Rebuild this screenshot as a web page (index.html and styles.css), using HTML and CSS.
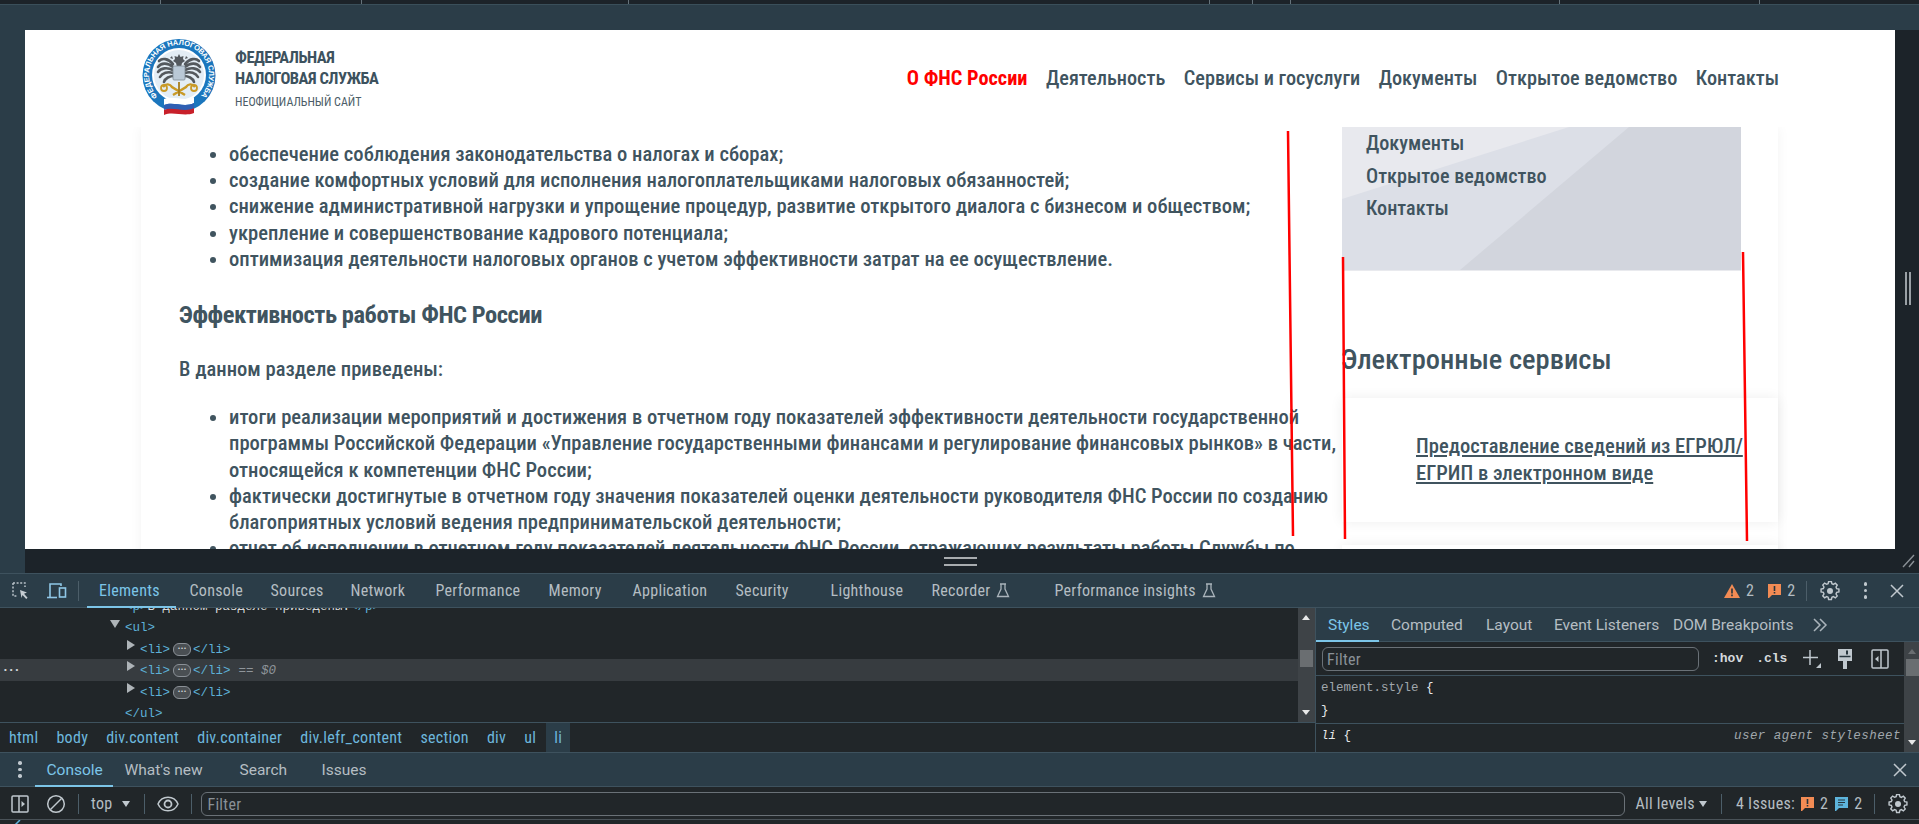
FILE: index.html
```html
<!DOCTYPE html>
<html lang="ru">
<head>
  <meta charset="UTF-8">
  <title>ФНС России</title>
  <link rel="stylesheet" href="styles.css">
</head>
<body>

  <div class="ruler"></div>

  <div class="device-area">
    <div class="device-row">
      <div class="viewport">
        <header class="site-header">
          <a class="logo">
            <svg class="logo-img" width="74" height="78" viewBox="0 0 74 78">
              <defs>
                <path id="ring-path" d="M13.8 56.2A30 30 0 1 1 56.2 56.2"/>
              </defs>
              <circle cx="37" cy="36.5" r="36.5" fill="#1b76bd"/>
              <g transform="translate(2 1)">
                <circle cx="35" cy="35" r="27" fill="#fff"/>
                <circle cx="35" cy="35" r="25" fill="#e3edf5"/>
                <text class="ring-text" textLength="140"><textPath href="#ring-path">ФЕДЕРАЛЬНАЯ НАЛОГОВАЯ СЛУЖБА</textPath></text>
                <!-- eagle -->
                <g stroke="#54595e" stroke-width="2.6" stroke-linecap="round" fill="none">
                  <path d="M29 24C24 18 18 18 15 21M29 27C23 22 17 23 14 27M29 30C23 27 17 28 14 32M29 33C24 31 18 33 16 37M30 36C26 36 21 38 20 42"/>
                  <path d="M41 24C46 18 52 18 55 21M41 27C47 22 53 23 56 27M41 30C47 27 53 28 56 32M41 33C46 31 52 33 54 37M40 36C44 36 49 38 50 42"/>
                </g>
                <path d="M35 14l-1.500 3-3-1 .5 3-2 2 3 2 1 4h4l1-4 3-2-2-2 .5-3-3 1z" fill="#54595e"/>
                <path d="M29 19l-3-1 2-2zM41 19l3-1-2-2z" fill="#54595e"/>
                <rect x="29" y="26" width="12" height="14" rx="1" fill="#b9c8d6" stroke="#7d8a96" stroke-width=".8"/>
                <!-- keys -->
                <path d="M19 47c3-4 7-3 9 0l13 8M51 47c-3-4-7-3-9 0l-13 8" stroke="#c99a27" stroke-width="2.4" fill="none"/>
                <circle cx="20" cy="48" r="3" fill="none" stroke="#c99a27" stroke-width="1.8"/>
                <circle cx="50" cy="48" r="3" fill="none" stroke="#c99a27" stroke-width="1.8"/>
                <path d="M35 42v14" stroke="#a67d1c" stroke-width="1.8"/>
              </g>
              <!-- flag -->
              <path d="M22 60c9-4 20 3 30-2v6c-10 5-21-2-30 2z" fill="#fff"/>
              <path d="M22 66c9-4 20 3 30-2v5c-10 5-21-2-30 2z" fill="#2f5fb3"/>
              <path d="M22 71c9-4 20 3 30-2v5c-10 4-21-2-30 2z" fill="#c8202a"/>
            </svg>
            <div class="logo-text">
              <div class="logo-title">ФЕДЕРАЛЬНАЯ<br>НАЛОГОВАЯ СЛУЖБА</div>
              <div class="logo-sub">НЕОФИЦИАЛЬНЫЙ САЙТ</div>
            </div>
          </a>
          <nav class="main-nav">
            <a class="active">О ФНС России</a>
            <a>Деятельность</a>
            <a>Сервисы и госуслуги</a>
            <a>Документы</a>
            <a>Открытое ведомство</a>
            <a>Контакты</a>
          </nav>
        </header>

        <div class="content">
          <div class="container">
            <section class="left-content">
              <ul>
                <li>обеспечение соблюдения законодательства о налогах и сборах;</li>
                <li>создание комфортных условий для исполнения налогоплательщиками налоговых обязанностей;</li>
                <li>снижение административной нагрузки и упрощение процедур, развитие открытого диалога с бизнесом и обществом;</li>
                <li>укрепление и совершенствование кадрового потенциала;</li>
                <li>оптимизация деятельности налоговых органов с учетом эффективности затрат на ее осуществление.</li>
              </ul>
              <h2>Эффективность работы ФНС России</h2>
              <p>В данном разделе приведены:</p>
              <ul>
                <li>итоги реализации мероприятий и достижения в отчетном году показателей эффективности деятельности государственной<br>программы Российской Федерации «Управление государственными финансами и регулирование финансовых рынков» в части,<br>относящейся к компетенции ФНС России;</li>
                <li>фактически достигнутые в отчетном году значения показателей оценки деятельности руководителя ФНС России по созданию<br>благоприятных условий ведения предпринимательской деятельности;</li>
                <li>отчет об исполнении в отчетном году показателей деятельности ФНС России, отражающих результаты работы Службы по</li>
              </ul>
            </section>
            <aside class="sidebar">
              <div class="side-menu">
                <a>Документы</a>
                <a>Открытое ведомство</a>
                <a>Контакты</a>
              </div>
              <h3>Электронные сервисы</h3>
              <div class="service-card">
                <a>Предоставление сведений из ЕГРЮЛ/<br>ЕГРИП в электронном виде</a>
              </div>
              <div class="service-card"></div>
            </aside>
          </div>
        </div>
      </div>
      <div class="side-handle"><span></span><span></span></div>
    </div>
    <div class="bottom-handle">
      <div class="dock-handle"></div>
      <svg class="corner-handle" width="16" height="14" viewBox="0 0 16 14"><path d="M3 13L14 1M9 13l5-6" stroke="#8a9096" stroke-width="1.4" fill="none"/></svg>
    </div>
  </div>

  <div class="devtools">
    <div class="tabbar main-tabs">
      <div class="tool-icon">
        <svg width="20" height="20" viewBox="0 0 20 20" fill="none"><path d="M2 2h12v4M2 2v13h4" stroke="#b9c2c9" stroke-width="1.5" stroke-dasharray="2 1.6"/><path d="M9 9l7 2.500-3 1.200 3.600 4-1.400 1.200-3.700-4-1 3z" fill="#c5ccd2"/></svg>
      </div>
      <div class="tool-icon">
        <svg width="22" height="20" viewBox="0 0 22 20" fill="none"><path d="M4 16V3h11v2" stroke="#8fc7e6" stroke-width="1.6"/><rect x="13.5" y="7" width="6" height="9" stroke="#8fc7e6" stroke-width="1.6"/><path d="M1 16.5h10" stroke="#8fc7e6" stroke-width="1.6"/></svg>
      </div>
      <div class="divider"></div>
      <a class="tab active tab-elements">Elements</a>
      <a class="tab tab-console">Console</a>
      <a class="tab tab-sources">Sources</a>
      <a class="tab tab-network">Network</a>
      <a class="tab tab-performance">Performance</a>
      <a class="tab tab-memory">Memory</a>
      <a class="tab tab-application">Application</a>
      <a class="tab tab-security">Security</a>
      <a class="tab tab-lighthouse">Lighthouse</a>
      <a class="tab tab-recorder">Recorder
        <svg width="14" height="15" viewBox="0 0 14 15" fill="none"><path d="M4 1h6M5 1v5L1.500 13.500h11L9 6V1" stroke="#aab4bb" stroke-width="1.3"/></svg>
      </a>
      <a class="tab tab-insights">Performance insights
        <svg width="14" height="15" viewBox="0 0 14 15" fill="none"><path d="M4 1h6M5 1v5L1.500 13.500h11L9 6V1" stroke="#aab4bb" stroke-width="1.3"/></svg>
      </a>
      <div class="tabbar-right">
        <svg width="16" height="14" viewBox="0 0 16 14"><path d="M8 0l8 14H0z" fill="#f28b54"/><path d="M7.200 4.500h1.600v5H7.200zM7.200 10.500h1.600v1.700H7.200z" fill="#26343c"/></svg>
        <span class="count">2</span>
        <svg class="icon-gap" width="13" height="14" viewBox="0 0 13 14"><path d="M0 0h13v11H4l-3 3H0z" fill="#f28b54"/><path d="M5.700 2h1.600v5H5.700zM5.700 8h1.600v1.600H5.700z" fill="#26343c"/></svg>
        <span class="count">2</span>
        <div class="divider divider-right"></div>
        <svg class="gear" width="20" height="20" viewBox="0 0 20 20" fill="none"><path d="M8.500 1.500h3l.5 2.400 1.600.7 2.100-1.300 2 2.100-1.300 2 .7 1.700 2.400.5v3l-2.400.5-.7 1.700 1.300 2-2 2.100-2.100-1.300-1.600.7-.5 2.400h-3L8 18.200l-1.600-.7-2.100 1.300-2-2.100 1.300-2-.7-1.700-2.400-.5v-3l2.400-.5.7-1.700-1.300-2 2-2.100 2.100 1.300L8 3.900z" transform="translate(0.6 -0.9) scale(.94)" stroke="#c0c8ce" stroke-width="1.5"/><circle cx="10" cy="10" r="3" fill="#c0c8ce"/></svg>
        <div class="dots"><i></i><i></i><i></i></div>
        <svg class="close" width="14" height="14" viewBox="0 0 14 14"><path d="M1 1l12 12M13 1L1 13" stroke="#c0c8ce" stroke-width="1.5"/></svg>
      </div>
    </div>

    <div class="panels">
      <div class="elements-panel">
        <div class="dom-tree">
          <div class="dom-scroll">
            <div class="dom-rows">
              <div class="dom-row depth-1"><b>&lt;p&gt;</b>В данном разделе приведены:<b>&lt;/p&gt;</b></div>
              <div class="dom-row depth-1"><i class="tri-down"></i><b>&lt;ul&gt;</b></div>
              <div class="dom-row depth-2"><i class="tri-right"></i><b>&lt;li&gt;</b><u class="ellipsis">•••</u><b>&lt;/li&gt;</b></div>
              <div class="dom-row depth-2 selected"><span class="row-dots">•••</span><i class="tri-right"></i><b>&lt;li&gt;</b><u class="ellipsis">•••</u><b>&lt;/li&gt;</b><em>== $0</em></div>
              <div class="dom-row depth-2"><i class="tri-right"></i><b>&lt;li&gt;</b><u class="ellipsis">•••</u><b>&lt;/li&gt;</b></div>
              <div class="dom-row depth-1"><b>&lt;/ul&gt;</b></div>
            </div>
          </div>
          <div class="scrollbar">
            <span class="arrow-up"></span>
            <span class="thumb thumb-dom"></span>
            <span class="arrow-down"></span>
          </div>
        </div>
        <div class="crumbs">
          <a>html</a><a>body</a><a>div.content</a><a>div.container</a><a>div.lefr_content</a><a>section</a><a>div</a><a>ul</a><a class="current">li</a>
        </div>
      </div>

      <div class="styles-panel">
        <div class="tabbar style-tabs">
          <a class="tab active tab-styles">Styles</a>
          <a class="tab tab-computed">Computed</a>
          <a class="tab tab-layout">Layout</a>
          <a class="tab tab-listeners">Event Listeners</a>
          <a class="tab tab-dom">DOM Breakpoints</a>
          <svg class="more" width="16" height="14" viewBox="0 0 16 14" fill="none"><path d="M2 1l6 6-6 6M8 1l6 6-6 6" stroke="#aab4bb" stroke-width="1.5"/></svg>
        </div>
        <div class="styles-body">
          <div class="styles-main">
            <div class="filter-row">
              <div class="filter-input">Filter</div>
              <span class="pill-text">:hov</span>
              <span class="pill-text">.cls</span>
              <svg class="plus" width="20" height="20" viewBox="0 0 20 20"><path d="M8 1v15M1 8.500h15" stroke="#c0c8ce" stroke-width="1.5"/><path d="M19 14v5h-5z" fill="#c0c8ce"/></svg>
              <svg class="brush" width="16" height="22" viewBox="0 0 16 22" fill="none"><path d="M1 1h14v12H1z" fill="#c0c8ce"/><path d="M2.500 8.500h11" stroke="#26343c" stroke-width="1.5"/><rect x="9" y="2.500" width="2" height="4" fill="#26343c"/><rect x="6" y="13" width="4" height="8" fill="#c0c8ce"/></svg>
              <svg class="pane" width="18" height="20" viewBox="0 0 18 20" fill="none"><rect x="1" y="1" width="16" height="18" rx="1" stroke="#c0c8ce" stroke-width="1.5"/><path d="M10 1v18" stroke="#c0c8ce" stroke-width="1.5"/><path d="M7.500 7v6L4 10z" fill="#c0c8ce"/></svg>
            </div>
            <div class="rule">
              <div class="code-line code-muted">element.style <span class="brace">{</span></div>
              <div class="code-line brace">}</div>
            </div>
            <div class="rule rule-last">
              <div class="code-line"><span class="selector">li</span> <span class="brace">{</span><span class="origin">user agent stylesheet</span></div>
              <div class="code-line code-indent"><span class="prop">display</span>: list-item;</div>
            </div>
          </div>
          <div class="scrollbar scrollbar-styles">
            <span class="arrow-up"></span>
            <span class="thumb thumb-styles"></span>
            <span class="arrow-down"></span>
          </div>
        </div>
      </div>
    </div>

    <div class="tabbar drawer-tabs">
      <div class="dots dots-drawer"><i></i><i></i><i></i></div>
      <a class="tab active tab-drawer-console">Console</a>
      <a class="tab tab-whatsnew">What's new</a>
      <a class="tab tab-search">Search</a>
      <a class="tab tab-issues">Issues</a>
      <svg class="close close-drawer" width="14" height="14" viewBox="0 0 14 14"><path d="M1 1l12 12M13 1L1 13" stroke="#c0c8ce" stroke-width="1.5"/></svg>
    </div>

    <div class="console-bar">
      <div class="tool-icon">
        <svg width="18" height="18" viewBox="0 0 18 18" fill="none"><rect x="1" y="1" width="16" height="16" rx="1" stroke="#c0c8ce" stroke-width="1.5"/><path d="M8 1v16" stroke="#c0c8ce" stroke-width="1.5"/><path d="M10.500 6v6l3.500-3z" fill="#c0c8ce"/></svg>
      </div>
      <div class="tool-icon">
        <svg width="20" height="20" viewBox="0 0 20 20" fill="none"><circle cx="10" cy="10" r="8.3" stroke="#c0c8ce" stroke-width="1.5"/><path d="M4.500 15.500l11-11" stroke="#c0c8ce" stroke-width="1.5"/></svg>
      </div>
      <div class="divider"></div>
      <span class="context">top</span>
      <i class="caret"></i>
      <div class="divider divider-eye"></div>
      <svg class="eye" width="22" height="16" viewBox="0 0 22 16" fill="none"><path d="M1 8c4-9 16-9 20 0-4 9-16 9-20 0z" stroke="#c0c8ce" stroke-width="1.5"/><circle cx="11" cy="8" r="3.5" stroke="#c0c8ce" stroke-width="1.8"/></svg>
      <div class="divider divider-filter"></div>
      <div class="filter-input console-filter">Filter</div>
      <span class="levels">All levels</span>
      <i class="caret caret-levels"></i>
      <div class="divider divider-issues"></div>
      <span class="issues">4 Issues:</span>
      <svg class="icon-small" width="13" height="14" viewBox="0 0 13 14"><path d="M0 0h13v11H4l-3 3H0z" fill="#f28b54"/><path d="M5.700 2h1.600v5H5.700zM5.700 8h1.600v1.600H5.700z" fill="#26343c"/></svg>
      <span class="count">2</span>
      <svg class="icon-small icon-blue" width="13" height="14" viewBox="0 0 13 14"><path d="M0 0h13v11H4l-3 3H0z" fill="#5db4dc"/><path d="M3 3h7M3 5.500h7M3 8h5" stroke="#26343c" stroke-width="1.1"/></svg>
      <span class="count">2</span>
      <div class="divider divider-gear"></div>
      <svg class="gear" width="20" height="20" viewBox="0 0 20 20" fill="none"><path d="M8.500 1.500h3l.5 2.400 1.600.7 2.100-1.300 2 2.100-1.300 2 .7 1.700 2.400.5v3l-2.400.5-.7 1.700 1.300 2-2 2.100-2.100-1.300-1.600.7-.5 2.400h-3L8 18.200l-1.600-.7-2.100 1.300-2-2.100 1.300-2-.7-1.700-2.400-.5v-3l2.400-.5.7-1.700-1.300-2 2-2.100 2.100 1.300L8 3.900z" transform="translate(0.6 -0.9) scale(.94)" stroke="#c0c8ce" stroke-width="1.5"/><circle cx="10" cy="10" r="3" fill="#c0c8ce"/></svg>
    </div>
    <div class="console-prompt">
      <svg width="8" height="5" viewBox="0 0 8 5"><path d="M1 5l5-5" stroke="#5db4dc" stroke-width="1.5"/></svg>
    </div>
  </div>

  <!-- red marks drawn over the page -->
  <svg class="marks" width="1919" height="824" viewBox="0 0 1919 824">
    <path d="M1288 131l5 405M1343 257l2 282M1743 252l4 289" stroke="#f00" stroke-width="2.5" fill="none"/>
  </svg>

</body>
</html>
```

FILE: styles.css
```css
html, body {
  height: 100%;
  margin: 0;
  overflow: hidden;
}

body {
  display: flex;
  flex-direction: column;
  position: relative;
  background-color: #1c2329;
  font-family: Roboto, sans-serif;
  font-stretch: 75%;
  font-weight: 500;
  color: #40545f;
}

.ruler {
  height: 4px;
  background-color: #1c2329;
  border-bottom: 1px solid #3a4f5a;
  background-image:
    linear-gradient(#66737b, #66737b), linear-gradient(#66737b, #66737b),
    linear-gradient(#66737b, #66737b), linear-gradient(#66737b, #66737b),
    linear-gradient(#66737b, #66737b), linear-gradient(#66737b, #66737b),
    linear-gradient(#66737b, #66737b), linear-gradient(#66737b, #66737b);
  background-size: 1px 4px;
  background-repeat: no-repeat;
  background-position: 160px 0, 361px 0, 628px 0, 1209px 0, 1252px 0, 1290px 0, 1559px 0, 1759px 0;
}

.device-area {
  height: 568px;
  display: flex;
  flex-direction: column;
  background-color: #2b3d48;
}

.device-row {
  flex: 1;
  display: flex;
  min-height: 0;
  padding: 25px 0 0 25px;
}

.viewport {
  width: 1870px;
  background-color: #fff;
  overflow: hidden;
  display: flex;
  flex-direction: column;
}

.side-handle {
  flex: 1;
  margin-top: -25px;
  padding-top: 267px;
  padding-left: 10px;
  background: linear-gradient(#2b3d48 25px, #1c2329 25px);
  display: flex;
  gap: 2px;
}

.side-handle span {
  width: 2px;
  height: 33px;
  background-color: #9aa0a5;
}

.bottom-handle {
  height: 24px;
  padding-left: 25px;
  background: linear-gradient(90deg, #2b3d48 25px, #1c2329 25px);
  display: flex;
  align-items: center;
}

.dock-handle {
  width: 33px;
  height: 5px;
  margin-left: 919px;
  border-top: 2px solid #a8acaf;
  border-bottom: 2px solid #a8acaf;
}

.corner-handle {
  margin-left: 923px;
}

/* site */

.site-header {
  height: 97px;
  flex-shrink: 0;
  position: relative;
  z-index: 1;
  background-color: #fff;
  display: flex;
  align-items: flex-start;
  justify-content: space-between;
  padding: 0 116px 0 117px;
}

.logo {
  display: flex;
  padding-top: 9px;
}

.logo-img {
  display: block;
}

.ring-text {
  font: bold 7.5px "Liberation Sans", sans-serif;
  fill: #fff;
}

.logo-text {
  margin-left: 19px;
  padding-top: 9px;
}

.logo-title {
  font-size: 16.5px;
  font-weight: 700;
  line-height: 20.5px;
  letter-spacing: -.5px;
  color: #3d525e;
}

.logo-sub {
  margin-top: 6px;
  font-size: 12px;
  font-weight: 400;
  line-height: 15px;
  color: #4c5d68;
}

.main-nav {
  display: flex;
  gap: 18.5px;
  padding-top: 36px;
  font-size: 20.3px;
  line-height: 24px;
}

.main-nav .active {
  color: #f00;
  font-weight: 700;
}

.content {
  flex: 1;
  min-height: 0;
  padding-left: 116px;
}

.container {
  width: 1637px;
  height: 600px;
  display: flex;
  background-color: #fff;
  box-shadow: 0 0 12px rgba(0, 0, 0, 0.05);
}

.left-content {
  width: 1201px;
  flex-shrink: 0;
  padding: 14px 0 0 38px;
  box-sizing: border-box;
  font-size: 20.6px;
  line-height: 26.2px;
  white-space: nowrap;
}

.left-content ul {
  margin: 0;
  padding-left: 50px;
}

.left-content h2 {
  margin: 27px 0 25px;
  font-size: 24.5px;
  line-height: 32px;
  font-weight: 700;
  letter-spacing: -.45px;
}

.left-content p {
  margin: 0 0 22px;
}

.sidebar {
  width: 436px;
}

.side-menu {
  position: relative;
  width: 399px;
  height: 143px;
  border-bottom: 1px solid #e9eaee;
  background-color: #d2d5dd;
  display: flex;
  flex-direction: column;
  font-size: 20.2px;
}

.side-menu::before,
.side-menu::after {
  content: "";
  position: absolute;
  inset: 0;
}

.side-menu::before {
  background-color: #dcdfe7;
  clip-path: polygon(0 0, 287px 0, 118px 100%, 0 100%);
}

.side-menu::after {
  background-color: #e8e9ee;
  clip-path: polygon(0 0, 227px 0, 0 72px);
}

.side-menu a {
  position: relative;
  z-index: 1;
  padding-left: 24px;
  line-height: 32.5px;
}

.sidebar h3 {
  margin: 71px 0 20px -1px;
  font-size: 28.5px;
  line-height: 36px;
  font-weight: 500;
}

.service-card {
  height: 124px;
  margin-bottom: 23px;
  box-sizing: border-box;
  padding: 35px 0 0 74px;
  background-color: #fff;
  box-shadow: 0 0 12px rgba(0, 0, 0, 0.07);
  font-size: 20.6px;
  line-height: 26.5px;
  white-space: nowrap;
}

.service-card a {
  text-decoration: underline;
}

/* devtools */

.devtools {
  flex: 1;
  display: flex;
  flex-direction: column;
  min-height: 0;
  background-color: #212629;
  font-stretch: 87.5%;
  font-weight: 400;
  font-size: 16px;
  letter-spacing: .3px;
  color: #b5bdc3;
  white-space: nowrap;
}

.tabbar {
  display: flex;
  align-items: center;
  background-color: #2b3d48;
  border-top: 1px solid #3e525e;
  border-bottom: 1px solid #3e525e;
  box-sizing: border-box;
  flex-shrink: 0;
}

.main-tabs {
  height: 35px;
  padding-left: 11px;
}

.tool-icon {
  width: 35px;
  display: flex;
  align-items: center;
}

.divider {
  width: 1px;
  height: 20px;
  background-color: #4c5e69;
  margin-left: -3px;
}

.tab {
  display: flex;
  align-items: center;
  height: 100%;
  padding-top: 1px;
  box-sizing: border-box;
  border-bottom: 2px solid transparent;
  margin-bottom: -1px;
}

.tab.active {
  color: #7cc5e8;
  border-bottom-color: #7cc5e8;
}

.tab svg {
  margin-left: 6px;
}

.tab-elements { width: 89px; margin-left: 8px; padding-left: 12px; }
.tab-console { width: 81px; padding-left: 13.5px; }
.tab-sources { width: 80px; padding-left: 13.5px; }
.tab-network { width: 85px; padding-left: 13.5px; }
.tab-performance { width: 113px; padding-left: 13.5px; }
.tab-memory { width: 84px; padding-left: 13.5px; }
.tab-application { width: 103px; padding-left: 13.5px; }
.tab-security { width: 95px; padding-left: 13.5px; }
.tab-lighthouse { width: 101px; padding-left: 13.5px; }
.tab-recorder { width: 123px; padding-left: 13.5px; }
.tab-insights { padding-left: 13.5px; }

.tabbar-right {
  margin-left: auto;
  display: flex;
  align-items: center;
  padding-right: 15px;
}

.count {
  margin-left: 6px;
}

.icon-gap {
  margin-left: 14px;
}

.divider-right {
  margin: 0 13px 0 10px;
}

.dots {
  display: flex;
  flex-direction: column;
  gap: 3px;
  margin-left: 24px;
}

.dots i {
  width: 3.5px;
  height: 3.5px;
  border-radius: 50%;
  background-color: #c0c8ce;
}

.tabbar-right .close {
  margin-left: 23px;
}

.panels {
  height: 144px;
  display: flex;
  flex-shrink: 0;
}

.elements-panel {
  width: 1316px;
  display: flex;
  flex-direction: column;
  border-right: 1px solid #3e525e;
  box-sizing: border-box;
}

.dom-tree {
  height: 115px;
  display: flex;
  font-family: "Liberation Mono", monospace;
  font-size: 12.5px;
  letter-spacing: 0;
  border-bottom: 1px solid #3e525e;
  box-sizing: border-box;
}

.dom-scroll {
  flex: 1;
  overflow: hidden;
}

.dom-rows {
  margin-top: -13.25px;
}

.dom-row {
  position: relative;
  height: 21.5px;
  line-height: 25px;
  color: #d5d9dc;
}

.depth-1 {
  padding-left: 125px;
}

.depth-2 {
  padding-left: 140px;
}

.dom-row b {
  font-weight: normal;
  color: #5db0d7;
}

.dom-row em {
  margin-left: 8px;
  color: #8f969b;
}

.selected {
  background-color: #373c40;
}

.row-dots {
  position: absolute;
  left: 3px;
  top: -2px;
  font-size: 8px;
  letter-spacing: 1px;
}

.tri-down,
.tri-right {
  display: inline-block;
  width: 0;
  height: 0;
  margin-right: 5px;
  vertical-align: 3px;
}

.tri-down {
  margin-left: -15px;
  border-left: 5px solid transparent;
  border-right: 5px solid transparent;
  border-top: 8px solid #aeb4b8;
}

.tri-right {
  margin-left: -13px;
  border-top: 5px solid transparent;
  border-bottom: 5px solid transparent;
  border-left: 8px solid #aeb4b8;
}

.ellipsis {
  display: inline-block;
  width: 16px;
  height: 11px;
  margin: 0 2px 0 3px;
  border: 1px solid #8a9096;
  border-radius: 6px;
  background-color: #4a4f53;
  color: #e0e3e5;
  font-size: 5px;
  line-height: 11px;
  text-align: center;
  text-decoration: none;
  overflow: hidden;
  vertical-align: -3px;
}

.scrollbar {
  width: 17px;
  flex-shrink: 0;
  position: relative;
  background-color: #3e4347;
}

.scrollbar-styles {
  width: 15px;
}

.arrow-up,
.arrow-down {
  position: absolute;
  left: 4px;
  width: 0;
  height: 0;
  border-left: 4px solid transparent;
  border-right: 4px solid transparent;
}

.arrow-up {
  top: 7px;
  border-bottom: 5px solid #e8e8e8;
}

.arrow-down {
  bottom: 7px;
  border-top: 5px solid #e8e8e8;
}

.scrollbar-styles .arrow-up {
  border-bottom-color: #6a6e71;
}

.thumb {
  position: absolute;
  left: 2px;
  width: 13px;
  background-color: #6a6e71;
}

.thumb-dom {
  top: 42px;
  height: 17px;
}

.thumb-styles {
  top: 17px;
  height: 17px;
}

.crumbs {
  flex: 1;
  display: flex;
  align-items: stretch;
  padding-left: 9px;
  color: #6db7dd;
}

.crumbs a {
  display: flex;
  align-items: center;
  margin-right: 18px;
}

.crumbs .current {
  margin: 0 0 0 -8px;
  padding: 0 8px;
  background-color: #2b3d48;
}

.styles-panel {
  flex: 1;
  display: flex;
  flex-direction: column;
  min-width: 0;
}

.style-tabs {
  height: 34px;
  border-top: 0;
  font-stretch: 100%;
  font-size: 15.5px;
  letter-spacing: 0;
}

.tab-styles { width: 63px; padding-left: 12px; }
.tab-computed { width: 95px; padding-left: 12px; }
.tab-layout { width: 68px; padding-left: 12px; }
.tab-listeners { width: 119px; padding-left: 12px; }
.tab-dom { width: 151px; padding-left: 12px; }

.styles-body {
  flex: 1;
  display: flex;
  min-height: 0;
}

.styles-main {
  flex: 1;
  min-width: 0;
  overflow: hidden;
}

.filter-row {
  height: 34px;
  display: flex;
  align-items: center;
  padding-left: 6px;
  box-sizing: border-box;
  border-bottom: 1px solid #3e525e;
}

.filter-input {
  width: 377px;
  height: 24px;
  flex-shrink: 0;
  line-height: 24px;
  box-sizing: border-box;
  padding-left: 4px;
  border: 1px solid #6a7177;
  border-radius: 6px;
  color: #8a9197;
}

.pill-text {
  margin-left: 13px;
  font-family: "Liberation Mono", monospace;
  font-size: 13px;
  font-weight: bold;
  letter-spacing: 0;
  color: #d5d9dc;
}

.plus {
  margin-left: 15px;
}

.brush {
  margin-left: 15px;
}

.pane {
  margin-left: 18px;
}

.rule {
  border-bottom: 1px solid #3e525e;
  padding: 1px 0 1px 5px;
  font-family: "Liberation Mono", monospace;
  font-size: 12.5px;
  letter-spacing: 0;
}

.rule-last {
  border-bottom: 0;
  padding-bottom: 0;
}

.code-line {
  position: relative;
  line-height: 22.5px;
  height: 22.5px;
}

.code-muted {
  color: #a0a7ac;
}

.brace {
  color: #e6e8ea;
}

.selector {
  color: #e6e8ea;
  font-style: italic;
}

.origin {
  position: absolute;
  right: 3px;
  top: 0;
  letter-spacing: .45px;
  color: #a0a7ac;
  font-style: italic;
}

.code-indent {
  padding-left: 25px;
}

.prop {
  color: #5db0d7;
}

.drawer-tabs {
  height: 35px;
  font-stretch: 100%;
  font-size: 15.5px;
  letter-spacing: 0;
}

.dots-drawer {
  margin-left: 18px;
}

.tab-drawer-console {
  width: 78px;
  margin-left: 13px;
  padding-left: 12px;
}

.tab-whatsnew { margin-left: 12px; width: 115px; }
.tab-search { width: 82px; }

.close-drawer {
  margin-left: auto;
  margin-right: 12px;
}

.console-bar {
  height: 33px;
  display: flex;
  align-items: center;
  padding: 1px 0 0 11px;
  box-sizing: border-box;
  border-bottom: 1px solid #4a5258;
  flex-shrink: 0;
}

.console-bar svg,
.console-bar .tool-icon,
.console-bar .divider {
  flex-shrink: 0;
}

.context {
  margin-left: 12px;
}

.caret {
  width: 0;
  height: 0;
  margin-left: 10px;
  border-left: 4px solid transparent;
  border-right: 4px solid transparent;
  border-top: 6px solid #c0c8ce;
}

.divider-eye {
  margin: 0 12px 0 14px;
}

.divider-filter {
  margin: 0 9px 0 12px;
}

.console-filter {
  width: 1424px;
  padding-left: 5px;
}

.levels {
  margin-left: 10px;
}

.caret-levels {
  margin-left: 4px;
}

.divider-issues {
  margin: 0 14px 0 14px;
}

.issues {
  margin-right: 6px;
}

.icon-blue {
  margin-left: 7px;
}

.divider-gear {
  margin: 0 13px 0 12px;
}

.console-prompt {
  flex: 1;
  padding-left: 14px;
  overflow: hidden;
  line-height: 0;
}

.marks {
  position: absolute;
  left: 0;
  top: 0;
  pointer-events: none;
}
```
